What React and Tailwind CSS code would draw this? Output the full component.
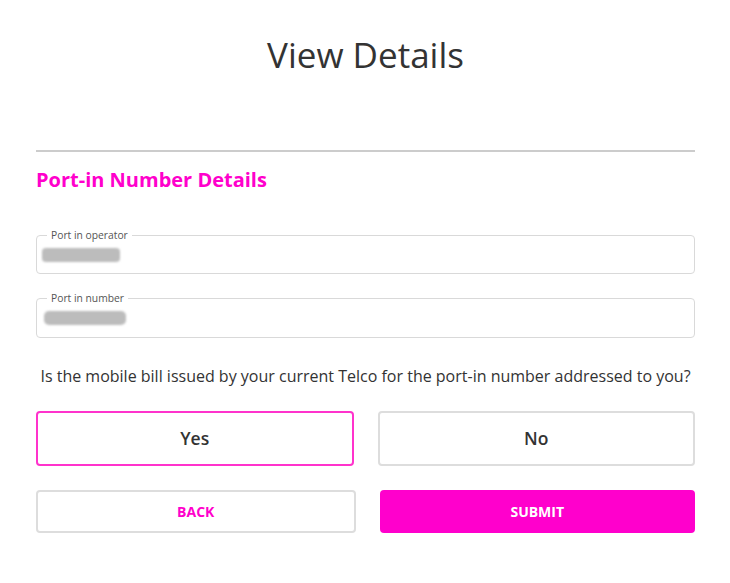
export default function App() {
  return (
    <div className="w-[730px] h-[583px] bg-white" style={{ fontFamily: '"Open Sans", sans-serif' }}>
      <div className="pl-[36px] pr-[35px] pt-[33px]">
        <h1 className="text-center text-[35px] leading-[44px] text-[#333]">View Details</h1>
        <div className="mt-[73px] h-[2px] bg-[#cccccc]"></div>
        <h2 className="mt-[15px] text-[20px] leading-[26px] font-bold text-[#ff00cc]">Port-in Number Details</h2>

        <fieldset className="mt-[37px] h-[44px] border border-[#d9d9d9] rounded-[4px] px-[10px]">
          <legend className="px-[4px] text-[10.3px] leading-[10px] text-[#555]">Port in operator</legend>
          <div className="mt-[8px] ml-[-5px] w-[78px] h-[14px] bg-[#bcbcbc] rounded-[4px] blur-[1px]"></div>
        </fieldset>

        <fieldset className="mt-[19px] h-[45px] border border-[#d9d9d9] rounded-[4px] px-[10px]">
          <legend className="px-[4px] text-[10.3px] leading-[10px] text-[#555]">Port in number</legend>
          <div className="mt-[8px] ml-[-3px] w-[82px] h-[14px] bg-[#bcbcbc] rounded-[5px] blur-[1px]"></div>
        </fieldset>

        <p className="mt-[27px] text-center text-[16px] leading-[22px] text-[#333]">
          Is the mobile bill issued by your current Telco for the port-in number addressed to you?
        </p>

        <div className="mt-[24px] flex gap-[24px]">
          <button className="flex-1 h-[55px] rounded-[4px] border-2 border-[#ff33cc] text-[17.5px] font-semibold text-[#333]">Yes</button>
          <button className="flex-1 h-[55px] rounded-[4px] border-2 border-[#dddddd] text-[17.5px] font-semibold text-[#333]">No</button>
        </div>

        <div className="mt-[24px] flex gap-[24px]">
          <button className="flex-1 h-[43px] rounded-[4px] border-2 border-[#dddddd] text-[14px] font-bold text-[#ff00cc]">BACK</button>
          <button className="flex-1 h-[43px] rounded-[4px] bg-[#ff00cc] text-[14px] font-bold text-white">SUBMIT</button>
        </div>
      </div>
    </div>
  );
}
